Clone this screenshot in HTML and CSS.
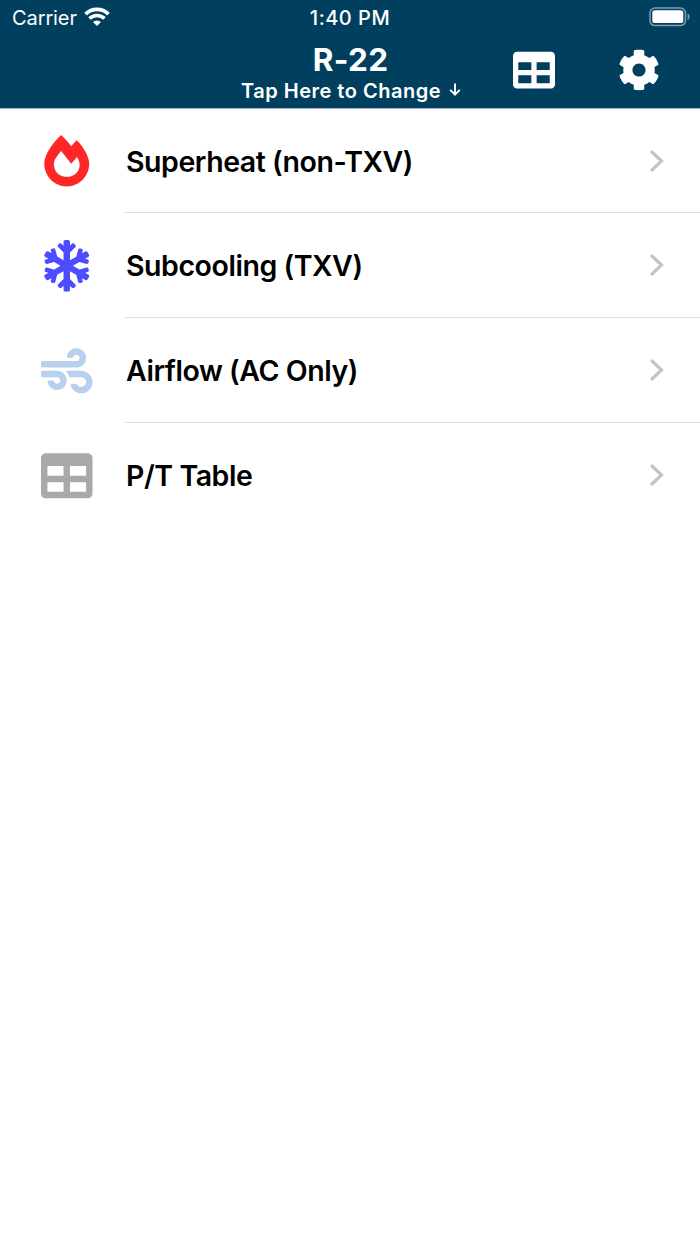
FILE: index.html
```html
<!DOCTYPE html>
<html lang="en">
<head>
  <meta charset="UTF-8">
  <meta name="viewport" content="width=device-width, initial-scale=1.0">
  <title>R-22</title>
  <link rel="stylesheet" href="styles.css">
</head>
<body>
  <header class="header">
    <div class="status-bar">
      <div class="carrier">
        <span>Carrier</span>
        <svg class="wifi" viewBox="0 0 26 19">
          <path d="M1.6 7.1a16.2 16.2 0 0 1 22.8 0" fill="none" stroke="#fff" stroke-width="3.8"/>
          <path d="M5.5 11.5a10.6 10.6 0 0 1 15 0" fill="none" stroke="#fff" stroke-width="3.5"/>
          <path d="M9 15.1a5.8 5.8 0 0 1 8 0l-4 3.9z" fill="#fff"/>
        </svg>
      </div>
      <div class="clock">1:40 PM</div>
      <svg class="battery" viewBox="0 0 42 20">
        <rect x="1" y="1" width="35.5" height="17.6" rx="5" fill="none" stroke="#7f9fb0" stroke-width="1.5"/>
        <rect x="3.3" y="3.3" width="31" height="12.8" rx="2.6" fill="#fff"/>
        <path d="M38.6 6.6c2.6 1 2.6 5.6 0 6.6z" fill="#7f9fb0"/>
      </svg>
    </div>

    <div class="nav-bar">
      <div class="title">
        <h1>R-22</h1>
        <p>
          <span>Tap Here to Change</span>
          <svg class="arrow" viewBox="0 0 12 14">
            <path d="M6 .5v11M1.2 6.9L6 11.7l4.8-4.8" fill="none" stroke="#fff" stroke-width="1.9"/>
          </svg>
        </p>
      </div>
      <div class="actions">
        <svg class="action-icon" viewBox="0 0 512 512">
          <path d="M464 32H48C21.49 32 0 53.49 0 80v352c0 26.51 21.49 48 48 48h416c26.51 0 48-21.49 48-48V80c0-26.51-21.49-48-48-48zM224 416H64v-96h160v96zm0-160H64v-96h160v96zm224 160H288v-96h160v96zm0-160H288v-96h160v96z"/>
        </svg>
        <svg class="action-icon" viewBox="0 0 512 512">
          <path d="M487.4 315.7l-42.6-24.6c4.3-23.2 4.3-47 0-70.2l42.6-24.6c4.9-2.8 7.1-8.6 5.5-14-11.1-35.6-30-67.8-54.7-94.6-3.8-4.1-10-5.1-14.8-2.3L380.8 110c-17.9-15.4-38.5-27.3-60.8-35.1V25.8c0-5.6-3.9-10.5-9.4-11.7-36.7-8.2-74.3-7.8-109.2 0-5.5 1.2-9.4 6.1-9.4 11.7V75c-22.2 7.9-42.8 19.8-60.8 35.1L88.7 85.5c-4.9-2.8-11-1.9-14.8 2.3-24.7 26.7-43.6 58.9-54.7 94.6-1.7 5.4.6 11.2 5.5 14L67.3 221c-4.3 23.2-4.3 47 0 70.2l-42.6 24.6c-4.9 2.8-7.1 8.6-5.5 14 11.1 35.6 30 67.8 54.7 94.6 3.8 4.1 10 5.1 14.8 2.3l42.6-24.6c17.9 15.4 38.5 27.3 60.8 35.1v49.2c0 5.6 3.9 10.5 9.4 11.7 36.7 8.2 74.3 7.8 109.2 0 5.5-1.2 9.4-6.1 9.4-11.7v-49.2c22.2-7.9 42.8-19.8 60.8-35.1l42.6 24.6c4.9 2.8 11 1.9 14.8-2.3 24.7-26.7 43.6-58.9 54.7-94.6 1.5-5.5-.7-11.3-5.6-14.1zM256 336c-44.1 0-80-35.9-80-80s35.9-80 80-80 80 35.9 80 80-35.9 80-80 80z"/>
        </svg>
      </div>
    </div>
  </header>

  <main class="menu">
    <div class="row">
      <svg class="icon fire" viewBox="-32 0 512 512">
        <path d="M323.56 51.2c-20.8 19.3-39.58 39.59-56.22 59.97C240.08 73.62 206.28 35.53 168 0 69.74 91.17 0 209.96 0 281.6 0 408.85 100.29 512 224 512s224-103.15 224-230.4c0-53.27-51.98-163.14-124.44-230.4zm-19.47 340.65C282.43 407.01 255.72 416 226.86 416 154.71 416 96 368.26 96 290.75c0-38.61 24.31-72.63 72.79-130.75 6.93 7.98 98.83 125.34 98.83 125.34l58.63-66.88c4.14 6.85 7.91 13.55 11.27 19.97 27.35 52.19 15.81 118.97-33.43 153.42z"/>
      </svg>
      <div class="cell">
        <span>Superheat (non-TXV)</span>
        <svg class="chevron" viewBox="0 0 14 22"><path d="M2 2l9.5 9L2 20"/></svg>
      </div>
    </div>
    <div class="row">
      <svg class="icon snow" viewBox="-32 0 512 512">
        <path d="M440.3 345.2l-33.8-19.5 26-7c8.2-2.2 13.1-10.7 10.9-18.9l-4-14.9c-2.2-8.2-10.7-13.1-18.9-10.9l-70.8 19-63.9-37 63.8-36.9 70.8 19c8.2 2.2 16.7-2.7 18.9-10.9l4-14.9c2.2-8.2-2.7-16.7-10.9-18.9l-26-7 33.8-19.5c7.4-4.3 9.9-13.7 5.7-21.1L430.4 119c-4.2-7.4-13.7-9.9-21.1-5.7l-33.8 19.5 7-26c2.2-8.2-2.7-16.7-10.9-18.9l-15-4c-8.2-2.2-16.7 2.7-18.9 10.9l-19 70.8-62.8 36.2v-77.5l53.7-53.1c6.2-6.2 6.2-16.4 0-22.6l-11.3-11.3c-6.2-6.2-16.4-6.2-22.6 0L256 56.4V16c0-8.8-7.2-16-16-16h-32c-8.8 0-16 7.2-16 16v40.4l-19.7-19.7c-6.2-6.2-16.4-6.2-22.6 0L138.3 48c-6.3 6.2-6.3 16.4 0 22.6l53.7 53.1v77.5l-62.8-36.2-19-70.8c-2.2-8.2-10.7-13.1-18.9-10.9l-15 4c-8.2 2.2-13.1 10.7-10.9 18.9l7 26-33.8-19.5c-7.4-4.3-16.8-1.7-21.1 5.7L2.1 145.7c-4.2 7.4-1.7 16.8 5.7 21.1l33.8 19.5-26 7c-8.3 2.2-13.2 10.7-11 19l4 14.9c2.2 8.2 10.7 13.1 18.9 10.9l70.8-19 63.8 36.9-63.8 36.9-70.8-19c-8.2-2.2-16.7 2.7-18.9 10.9l-4 14.9c-2.2 8.2 2.7 16.7 10.9 18.9l26 7-33.8 19.6c-7.4 4.3-9.9 13.7-5.7 21.1l15.5 26.8c4.2 7.4 13.7 9.9 21.1 5.7l33.8-19.5-7 26c-2.2 8.2 2.7 16.7 10.9 18.9l15 4c8.2 2.2 16.7-2.7 18.9-10.9l19-70.8 62.8-36.2v77.5l-53.7 53.1c-6.3 6.2-6.3 16.4 0 22.6l11.3 11.3c6.2 6.2 16.4 6.2 22.6 0l19.7-19.7V496c0 8.8 7.2 16 16 16h32c8.8 0 16-7.2 16-16v-40.4l19.7 19.7c6.2 6.2 16.4 6.2 22.6 0l11.3-11.3c6.3-6.2 6.3-16.4 0-22.6L256 387.7v-77.5l62.8 36.2 19 70.8c2.2 8.2 10.7 13.1 18.9 10.9l15-4c8.2-2.2 13.1-10.7 10.9-18.9l-7-26 33.8 19.5c7.4 4.3 16.9 1.7 21.1-5.7l15.5-26.8c4.1-7.4 1.6-16.8-5.8-21z"/>
      </svg>
      <div class="cell">
        <span>Subcooling (TXV)</span>
        <svg class="chevron" viewBox="0 0 14 22"><path d="M2 2l9.5 9L2 20"/></svg>
      </div>
    </div>
    <div class="row">
      <svg class="icon wind" viewBox="0 0 512 512">
        <path d="M156.7 256H16c-8.8 0-16 7.2-16 16v32c0 8.8 7.2 16 16 16h142.2c15.9 0 30.8 10.9 33.4 26.6 3.3 20-12.1 37.4-31.6 37.4-14.1 0-26.1-9.2-30.4-21.9-2.1-6.3-8.6-10.1-15.2-10.1H81.6c-9.8 0-17.7 8.8-15.9 18.4 8.6 44.1 47.6 77.6 94.2 77.6 57.1 0 102.7-50.1 95.2-108.6C249 291 205.4 256 156.7 256zM16 224h336c59.7 0 106.8-54.8 93.8-116.7-7.6-36.2-36.9-65.5-73.1-73.1-55.4-11.6-105.1 24.9-114.9 75.5-1.9 9.6 6.1 18.3 15.8 18.3h32.8c6.7 0 13.1-3.8 15.2-10.1C325.9 105.2 337.9 96 352 96c19.4 0 34.9 17.4 31.6 37.4-2.6 15.7-17.4 26.6-33.4 26.6H16c-8.8 0-16 7.2-16 16v32c0 8.8 7.2 16 16 16zm384 32H243.7c19.3 16.6 33.2 38.8 39.8 64H400c26.5 0 48 21.5 48 48s-21.5 48-48 48c-17.9 0-33.3-9.9-41.6-24.4-2.9-5-8.7-7.6-14.5-7.6h-33.8c-10.9 0-19 10.8-15.3 21.1 17.8 50.6 70.5 84.8 129.4 72.3 41.2-8.7 75.1-41.6 84.7-82.7C526 321.5 470.5 256 400 256z"/>
      </svg>
      <div class="cell">
        <span>Airflow (AC Only)</span>
        <svg class="chevron" viewBox="0 0 14 22"><path d="M2 2l9.5 9L2 20"/></svg>
      </div>
    </div>
    <div class="row">
      <svg class="icon table" viewBox="0 0 512 512">
        <path d="M464 32H48C21.49 32 0 53.49 0 80v352c0 26.51 21.49 48 48 48h416c26.51 0 48-21.49 48-48V80c0-26.51-21.49-48-48-48zM224 416H64v-96h160v96zm0-160H64v-96h160v96zm224 160H288v-96h160v96zm0-160H288v-96h160v96z"/>
      </svg>
      <div class="cell">
        <span>P/T Table</span>
        <svg class="chevron" viewBox="0 0 14 22"><path d="M2 2l9.5 9L2 20"/></svg>
      </div>
    </div>
  </main>
</body>
</html>
```
FILE: styles.css
```css
* {
  box-sizing: border-box;
}

body {
  font-family: Inter, "Liberation Sans", sans-serif;
  background-color: #ffffff;
  color: #000000;
  margin: 0;
}

svg {
  display: block;
  flex-shrink: 0;
  overflow: visible;
}

.header {
  height: 109px;
  background-color: #00405e;
  color: #ffffff;
  border-bottom: 1px solid #9fb5c0;
}

.status-bar {
  display: grid;
  grid-template-columns: 1fr auto 1fr;
  align-items: center;
  height: 36px;
  padding: 0 9px 0 12px;
  font-size: 20px;
}

.carrier {
  display: flex;
  align-items: center;
  gap: 7px;
  letter-spacing: -0.1px;
}

.wifi {
  width: 26px;
  height: 19px;
  margin-bottom: 3px;
}

.clock {
  font-weight: 500;
  letter-spacing: 0.5px;
  margin-right: 3px;
}

.battery {
  width: 42px;
  height: 20px;
  justify-self: end;
  margin: 0 0 2px;
}

.nav-bar {
  display: grid;
  grid-template-columns: 1fr auto 1fr;
  height: 72px;
}

.title {
  grid-column: 2;
  text-align: center;
}

h1 {
  margin: 6px 0 0 1px;
  font-size: 31.5px;
  line-height: 36px;
  font-weight: 700;
  letter-spacing: 0.3px;
}

.title p {
  display: flex;
  align-items: center;
  gap: 8px;
  margin: 0 -2px 0 0;
  font-size: 20px;
  line-height: 26px;
  font-weight: 600;
  letter-spacing: 0.5px;
}

.arrow {
  width: 12px;
  height: 14px;
  margin-bottom: 2px;
}

.actions {
  display: flex;
  justify-content: flex-end;
  align-items: center;
  gap: 63px;
  padding: 0 40px 4px 0;
}

.action-icon {
  width: 42px;
  height: 42px;
  fill: #ffffff;
}

.row {
  display: flex;
  align-items: center;
  height: 105px;
  padding-left: 41px;
}

.row:first-child {
  height: 104px;
}

.icon {
  width: 51.5px;
  height: 51.5px;
  margin-right: 32.5px;
}

.fire {
  fill: #ff2626;
}

.snow {
  fill: #4d4dff;
}

.wind {
  fill: #b8cfef;
}

.table {
  fill: #a9a9a9;
}

.cell {
  display: flex;
  flex: 1;
  justify-content: space-between;
  align-items: center;
  height: 100%;
  padding-right: 36px;
  border-bottom: 1px solid #dedede;
  font-size: 28.5px;
  font-weight: 600;
  letter-spacing: -0.45px;
}

.cell span {
  padding: 1px 0 0 1px;
}

.row:last-child .cell {
  border-bottom-color: transparent;
}

.chevron {
  width: 14px;
  height: 22px;
  fill: none;
  stroke: #c4c4c6;
  stroke-width: 3.2;
  stroke-linecap: round;
}
```
